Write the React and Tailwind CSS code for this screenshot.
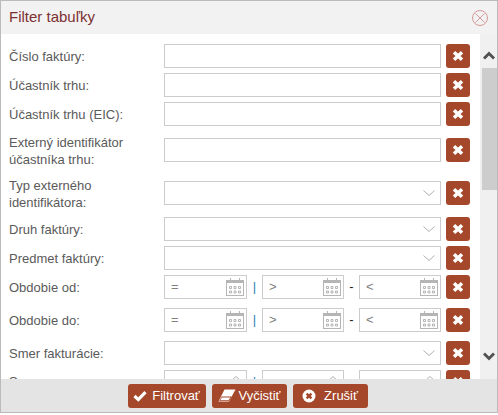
const inputBox = 'h-6 border border-[#cccccc] bg-white'

const IconCalendar = () => (
  <svg width="20" height="18" viewBox="0 0 20 18" fill="none" stroke="#b5b5b5" strokeWidth="1">
    <rect x="1.5" y="2.5" width="17" height="15" />
    <path d="M1.5 4h17" strokeWidth="2" />
    <path d="M5.5 0v4M14.5 0v4" />
    <path d="M4.5 8.5h2v2h-2zM9 8.5h2v2H9zM13.5 8.5h2v2h-2zM4.5 13h2v2h-2zM9 13h2v2H9zM13.5 13h2v2h-2z" />
  </svg>
)

const IconTimes = () => (
  <svg width="12" height="12" viewBox="0 0 12 12" fill="none" stroke="#fff" strokeWidth="3.6">
    <path d="M2 2.3l8 7.4M10 2.3l-8 7.4" />
  </svg>
)

const IconCheck = () => (
  <svg width="14" height="12" viewBox="0 0 14 12" fill="none" stroke="#fff" strokeWidth="3.2">
    <path d="M1.5 6l3.8 3.6L12.5 2.2" />
  </svg>
)

const IconEraser = () => (
  <svg width="18" height="13" viewBox="0 0 18 13">
    <path d="M6.5 0.5H17.5L11 12.5H0.5z" fill="#fff" />
    <path d="M3.6 7.5H13.8L11 12H1.2z" fill="#a5472a" />
    <path d="M3.9 8.4H12.4L10.4 11.3H2.2z" fill="#fff" />
  </svg>
)

const IconCircleTimes = () => (
  <svg width="14" height="14" viewBox="0 0 14 14">
    <circle cx="7" cy="7" r="6.5" fill="#fff" />
    <path d="M4.6 4.6l4.8 4.8M9.4 4.6l-4.8 4.8" stroke="#a5472a" strokeWidth="2.4" />
  </svg>
)

const IconClose = () => (
  <svg width="16" height="16" viewBox="0 0 16 16" fill="none" stroke="#d69a9a" strokeWidth="1">
    <circle cx="8" cy="8" r="7.5" />
    <path d="M3.5 3.5l9 9M12.5 3.5l-9 9" />
  </svg>
)

const ScrollChevron = ({ d, className }) => (
  <svg width="12" height="9" viewBox="0 0 12 9" fill="none" stroke="#505050" strokeWidth="2.8" className={className}>
    <path d={d} />
  </svg>
)

const ClearBtn = () => (
  <button className="ml-[5px] h-6 w-6 shrink-0 rounded-[3px] bg-[#a5472a] flex items-center justify-center">
    <IconTimes />
  </button>
)

const TextRow = ({ label, rowClass = 'h-6', labelClass = '' }) => (
  <div className={`flex items-center mb-[5px] ${rowClass}`}>
    <label className={`w-[155px] shrink-0 pr-3 leading-[17px] ${labelClass}`}>{label}</label>
    <div className={`${inputBox} w-[277px]`} />
    <ClearBtn />
  </div>
)

const SelectRow = ({ label, rowClass = 'h-6', labelClass = '' }) => (
  <div className={`flex items-center mb-[5px] ${rowClass}`}>
    <label className={`w-[155px] shrink-0 pr-3 leading-[17px] ${labelClass}`}>{label}</label>
    <div className={`${inputBox} w-[277px] flex items-center justify-end pr-[4px]`}>
      <svg width="12" height="7" viewBox="0 0 12 7" fill="none" stroke="#b0b0b0" strokeWidth="1" className="mr-px">
        <path d="M0.5 0.5l5.5 5 5.5-5" />
      </svg>
    </div>
    <ClearBtn />
  </div>
)

const DateField = ({ sign, width }) => (
  <div className={`${inputBox} ${width} flex items-center justify-between pl-[6px] pr-[1px] text-[#808080]`}>
    <span>{sign}</span>
    <IconCalendar />
  </div>
)

const DateRow = ({ label }) => (
  <div className="flex items-center mb-[9px] h-6">
    <label className="w-[155px] shrink-0 pt-px">{label}</label>
    <DateField sign="=" width="w-[83px]" />
    <span className="w-[15px] text-center text-[#2f7fb8]">|</span>
    <DateField sign=">" width="w-[82px]" />
    <span className="w-[15px] text-center text-[#222]">-</span>
    <DateField sign="<" width="w-[82px]" />
    <ClearBtn />
  </div>
)

const NumberField = ({ width }) => (
  <div className={`${inputBox} ${width} flex items-start justify-end pt-1 pr-1`}>
    <svg width="12" height="7" viewBox="0 0 12 7" fill="none" stroke="#b0b0b0" strokeWidth="1">
      <path d="M0.5 6.5l5.5-5 5.5 5" />
    </svg>
  </div>
)

const FooterBtn = ({ icon, children, width, gap }) => (
  <button className={`h-6 ${width} ${gap} rounded-[3px] bg-[#a5472a] text-white text-[13px] flex items-center justify-center`}>
    {icon}
    {children}
  </button>
)

export default function App() {
  return (
    <div className="h-[415px] w-[498px] bg-white font-['Liberation_Sans',Arial,sans-serif]">
      <div className="h-[413px] border border-[#bbbbbb] flex flex-col">
        <div className="h-[33px] shrink-0 bg-[#f2f2f2] flex items-center justify-between pl-2 pr-[9px]">
          <h1 className="text-[15px] text-[#7d3030]">Filter tabuľky</h1>
          <IconClose />
        </div>

        <div className="flex-1 min-h-0 flex">
          <div className="flex-1 min-h-0 overflow-hidden pt-[10px] pl-2 text-[13px] text-[#5a5a5a]">
            <TextRow label="Číslo faktúry:" />
            <TextRow label="Účastník trhu:" />
            <TextRow label="Účastník trhu (EIC):" />
            <TextRow label="Externý identifikátor účastníka trhu:" rowClass="h-[38px]" labelClass="pt-[2px]" />
            <SelectRow label="Typ externého identifikátora:" rowClass="h-[38px]" labelClass="pt-[2px]" />
            <SelectRow label="Druh faktúry:" />
            <SelectRow label="Predmet faktúry:" />
            <DateRow label="Obdobie od:" />
            <DateRow label="Obdobie do:" />
            <SelectRow label="Smer fakturácie:" />
            <div className="flex items-center h-6">
              <label className="w-[155px] shrink-0">Suma:</label>
              <NumberField width="w-[83px]" />
              <span className="w-[15px] text-center text-[#2f7fb8]">|</span>
              <NumberField width="w-[82px]" />
              <span className="w-[15px] text-center text-[#222]">-</span>
              <NumberField width="w-[82px]" />
              <ClearBtn />
            </div>
          </div>

          <div className="w-[17px] shrink-0 bg-[#f0f0f0] flex flex-col items-center pl-px">
            <ScrollChevron d="M1 7.5l5-5 5 5" className="mt-[17px] mb-[8px]" />
            <div className="h-[122px] w-[15px] bg-[#cdcdcd]" />
            <div className="flex-1" />
            <ScrollChevron d="M1 1.5l5 5 5-5" className="mb-[18px]" />
          </div>
        </div>

        <div className="h-[33px] shrink-0 bg-[#e4e4e4] flex items-center justify-center gap-[6px] pr-[3px]">
          <FooterBtn width="w-[78px]" gap="gap-[5px]" icon={<IconCheck />}>Filtrovať</FooterBtn>
          <FooterBtn width="w-[75px]" gap="gap-[3px]" icon={<IconEraser />}>Vyčistiť</FooterBtn>
          <FooterBtn width="w-[75px]" gap="gap-[8px]" icon={<IconCircleTimes />}>Zrušiť</FooterBtn>
        </div>
      </div>
    </div>
  )
}
